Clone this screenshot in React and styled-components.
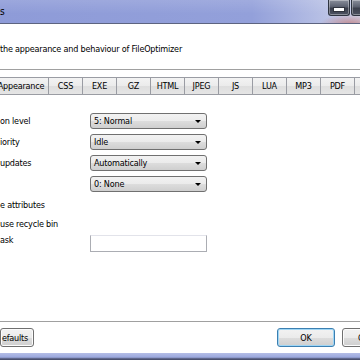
import React from 'react';
import styled, { createGlobalStyle } from 'styled-components';

const GlobalStyle = createGlobalStyle`
  html, body {
    margin: 0;
    padding: 0;
    overflow: hidden;
    background: #ffffff;
  }
  body {
    font-family: "DejaVu Sans Condensed", "DejaVu Sans", sans-serif;
    font-size: 9px;
    letter-spacing: -0.2px;
    color: #000;
  }
`;

const Window = styled.div`
  width: 360px;
  height: 360px;
  display: flex;
  flex-direction: column;
  background: #ffffff;
  overflow: hidden;
`;

const TitleBar = styled.div`
  height: 23px;
  flex-shrink: 0;
  display: flex;
  align-items: flex-start;
  justify-content: space-between;
  background:
    radial-gradient(ellipse 30px 10px at 350px 24px, rgba(190, 90, 80, 0.55), rgba(190, 90, 80, 0) 100%),
    linear-gradient(180deg, rgba(255, 255, 255, 0.12) 0%, rgba(255, 255, 255, 0) 60%),
    linear-gradient(90deg, #8e9bd8 0%, #93a0da 70%, #b4bde4 88%, #cdd2ea 100%);
  border-bottom: 1px solid #5d6480;
`;

const TitleText = styled.span`
  padding: 6px 0 0 0;
  font-size: 10px;
  color: #000;
`;

const Controls = styled.div`
  display: flex;
  margin-right: -13px;
`;

const CtrlButton = styled.div`
  width: 22px;
  height: 16px;
  margin-left: 1px;
  box-sizing: border-box;
  border: 1px solid #2e3440;
  border-top: none;
  border-radius: 0 0 3px 3px;
  background: linear-gradient(180deg, #8a8f9c 0%, #5c6170 45%, #3b3f4c 55%, #4c5262 100%);
  box-shadow: inset 0 0 0 1px rgba(255, 255, 255, 0.35);
  display: flex;
  align-items: center;
  justify-content: center;
`;

const MinBar = styled.div`
  width: 10px;
  height: 3px;
  margin-top: 3px;
  background: #ffffff;
  border: 1px solid #30343e;
`;

const Header = styled.div`
  height: 46px;
  flex-shrink: 0;
  display: flex;
  align-items: center;
  padding-top: 4px;
  border-bottom: 1px solid #a0a0a0;
  box-sizing: border-box;
  white-space: nowrap;
`;

const TabStrip = styled.div`
  display: flex;
  margin-top: 7px;
  margin-left: -7px;
  height: 18px;
  flex-shrink: 0;
`;

const Tab = styled.div`
  width: ${p => p.w || 35}px;
  flex-shrink: 0;
  box-sizing: border-box;
  height: 18px;
  display: flex;
  align-items: center;
  justify-content: center;
  border: 1px solid #9a9ca3;
  margin-right: -1px;
  background: linear-gradient(180deg, #f3f3f3 0%, #ebebeb 50%, #dedede 51%, #e5e5e5 100%);
  white-space: nowrap;
`;

const Form = styled.div`
  display: flex;
  flex-direction: column;
  padding-top: 18px;
`;

const Row = styled.div`
  display: grid;
  grid-template-columns: 90px 117px;
  align-items: ${p => p.align || 'center'};
  height: ${p => p.h}px;
  margin-bottom: ${p => p.gap || 0}px;
  white-space: nowrap;
`;

const Label = styled.span`
  padding-top: ${p => p.pt || 0}px;
`;

const Combo = styled.div`
  height: 16px;
  box-sizing: border-box;
  border: 1px solid #707070;
  border-radius: 3px;
  background: linear-gradient(180deg, #f2f2f2 0%, #ebebeb 50%, #dddddd 51%, #cfcfcf 100%);
  display: flex;
  align-items: center;
  justify-content: space-between;
  padding: 0 5px 0 3px;
`;

const Arrow = styled.span`
  width: 0;
  height: 0;
  border-left: 3px solid transparent;
  border-right: 3px solid transparent;
  border-top: 3px solid #000;
`;

const TextBox = styled.div`
  height: 17px;
  box-sizing: border-box;
  border: 1px solid #abadb3;
  border-top-color: #e2e3ea;
  background: #fff;
  margin-top: 2px;
`;

const Spacer = styled.div`
  flex: 1;
`;

const Footer = styled.div`
  height: 32px;
  flex-shrink: 0;
  border-top: 1px solid #a0a0a0;
  display: flex;
  align-items: flex-start;
  justify-content: space-between;
  padding-top: 6px;
  box-sizing: border-box;
`;

const Button = styled.div`
  height: 19px;
  box-sizing: border-box;
  width: ${p => p.w}px;
  padding-right: ${p => p.pr || 0}px;
  border: 1px solid ${p => (p.primary ? '#3c7fb1' : '#707070')};
  border-radius: 3px;
  background: linear-gradient(180deg, #f2f2f2 0%, #ebebeb 50%, #dddddd 51%, #cfcfcf 100%);
  box-shadow: ${p => (p.primary ? 'inset 0 0 0 1px #9fd6f5' : 'inset 0 0 0 1px #fcfcfc')};
  display: flex;
  align-items: center;
  justify-content: center;
  white-space: nowrap;
`;

const FooterRight = styled.div`
  display: flex;
  gap: 7px;
  margin-right: -40px;
`;

const BottomFrame = styled.div`
  height: 7px;
  flex-shrink: 0;
  background: linear-gradient(180deg, #b4bde6 0%, #9ba8dd 60%, #5b6285 80%, #3f4460 100%);
`;

const tabs = ['CSS', 'EXE', 'GZ', 'HTML', 'JPEG', 'JS', 'LUA', 'MP3', 'PDF', 'PNG'];

const App = () => {
  return (
    <Window>
      <GlobalStyle />
      <TitleBar>
        <TitleText>s</TitleText>
        <Controls>
          <CtrlButton><MinBar /></CtrlButton>
          <CtrlButton />
        </Controls>
      </TitleBar>
      <Header>the appearance and behaviour of FileOptimizer</Header>
      <TabStrip>
        <Tab w={56}>Appearance</Tab>
        {tabs.map(t => (
          <Tab key={t}>{t}</Tab>
        ))}
      </TabStrip>
      <Form>
        <Row h={16} gap={5}>
          <Label>on level</Label>
          <Combo>5: Normal<Arrow /></Combo>
        </Row>
        <Row h={16} gap={5}>
          <Label>iority</Label>
          <Combo>Idle<Arrow /></Combo>
        </Row>
        <Row h={16} gap={5}>
          <Label>updates</Label>
          <Combo>Automatically<Arrow /></Combo>
        </Row>
        <Row h={16} gap={3}>
          <Label />
          <Combo>0: None<Arrow /></Combo>
        </Row>
        <Row h={19}>
          <Label>e attributes</Label>
        </Row>
        <Row h={19}>
          <Label>use recycle bin</Label>
        </Row>
        <Row h={19} align="start">
          <Label pt={2}>ask</Label>
          <TextBox />
        </Row>
      </Form>
      <Spacer />
      <Footer>
        <Button w={34} pr={4}>efaults</Button>
        <FooterRight>
          <Button w={58} primary>OK</Button>
          <Button w={58}>Cancel</Button>
        </FooterRight>
      </Footer>
      <BottomFrame />
    </Window>
  );
};

export default App;
